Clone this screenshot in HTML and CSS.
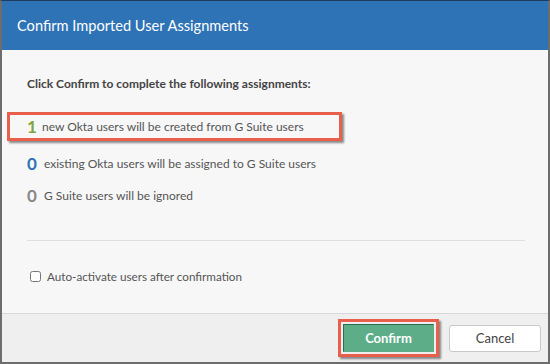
FILE: index.html
```html
<!DOCTYPE html>
<html lang="en">
  <head>
    <meta charset="UTF-8" />
    <title>Confirm Imported User Assignments</title>
    <link rel="stylesheet" href="styles.css">
  </head>
  <body>
    <div class="dialog">
      <div class="dialog-header">
        <h1>Confirm Imported User Assignments</h1>
      </div>

      <div class="dialog-body">
        <p class="lead">Click Confirm to complete the following assignments:</p>

        <ul class="summary">
          <li class="summary-row highlight">
            <span class="count count-new">1</span>
            new Okta users will be created from G Suite users
          </li>
          <li class="summary-row">
            <span class="count count-existing">0</span>
            existing Okta users will be assigned to G Suite users
          </li>
          <li class="summary-row">
            <span class="count count-ignored">0</span>
            G Suite users will be ignored
          </li>
        </ul>

        <hr class="divider" />

        <label class="check">
          <input type="checkbox" />
          <span>Auto-activate users after confirmation</span>
        </label>
      </div>

      <div class="dialog-footer">
        <span class="btn-wrap highlight">
          <button class="btn btn-primary">Confirm</button>
        </span>
        <button class="btn">Cancel</button>
      </div>
    </div>
  </body>
</html>
```

FILE: styles.css
```css
* {
  box-sizing: border-box;
}

body {
  margin: 0;
  width: 550px;
  height: 364px;
  overflow: hidden;
  font-family: Lato, 'Liberation Sans', sans-serif;
  color: #4a4a4a;
}

.dialog {
  height: 364px;
  display: flex;
  flex-direction: column;
  background-color: #f7f7f7;
  border-top: 1px solid #1e3b5c;
  border-left: 2px solid #6d6d6d;
  border-right: 2px solid #6d6d6d;
  border-bottom: 2px solid #6d6d6d;
}

.dialog-header {
  height: 49px;
  background-color: #2e73b5;
  display: flex;
  align-items: center;
  padding-left: 15px;
}

.dialog-header h1 {
  margin: 0;
  font-size: 14.6px;
  font-weight: normal;
  color: #fff;
}

.dialog-body {
  flex: 1;
  padding: 26px 23px 0 25px;
}

.lead {
  margin: 0;
  font-size: 12px;
  font-weight: bold;
  color: #444;
  line-height: 16px;
}

.summary {
  list-style: none;
  margin: 20px 0 0;
  padding: 0;
}

.summary-row {
  display: flex;
  align-items: center;
  height: 29px;
  font-size: 12px;
  color: #555;
}

.summary-row + .summary-row {
  margin-top: 3px;
}

.summary-row.highlight {
  margin: 0 0 8px -20px;
  padding-left: 17px;
  width: 335px;
  border: 3px solid #e8604c;
  box-shadow: 2px 2px 2px rgba(0, 0, 0, 0.45);
}

.count {
  display: inline-block;
  width: 15px;
  font-size: 17px;
  font-weight: bold;
}

.count-new {
  color: #7ea43d;
}

.count-existing {
  width: 17px;
  color: #2e73b5;
}

.count-ignored {
  width: 17px;
  color: #888;
}

.divider {
  border: 0;
  border-top: 1px solid #dedede;
  margin: 30px 0 0;
}

.check {
  display: flex;
  align-items: center;
  margin-top: 28px;
  font-size: 11.7px;
  color: #555;
}

.check input {
  margin: 0 6px 0 3px;
  width: 11px;
  height: 11px;
}

.dialog-footer {
  height: 49px;
  border-top: 1px solid #d8d8d8;
  background-color: #efefef;
  display: flex;
  align-items: center;
  justify-content: flex-end;
  padding-right: 7px;
  gap: 10px;
}

.btn {
  cursor: pointer;
  height: 27px;
  width: 92px;
  font-family: inherit;
  font-size: 13px;
  color: #444;
  background-color: #fff;
  border: 1px solid #c8c8c8;
  border-radius: 3px;
}

.btn-wrap.highlight {
  display: flex;
  padding: 2px;
  border: 3px solid #e8604c;
  box-shadow: 2px 2px 2px rgba(0, 0, 0, 0.45);
}

.btn-primary {
  height: 28px;
  width: 91px;
  border-radius: 0;
  color: #fff;
  font-weight: bold;
  background-color: #5cad88;
  border: 1px solid #2f6b4f;
  border-right-color: #5cad88;
  border-bottom-color: #5cad88;
}
```
